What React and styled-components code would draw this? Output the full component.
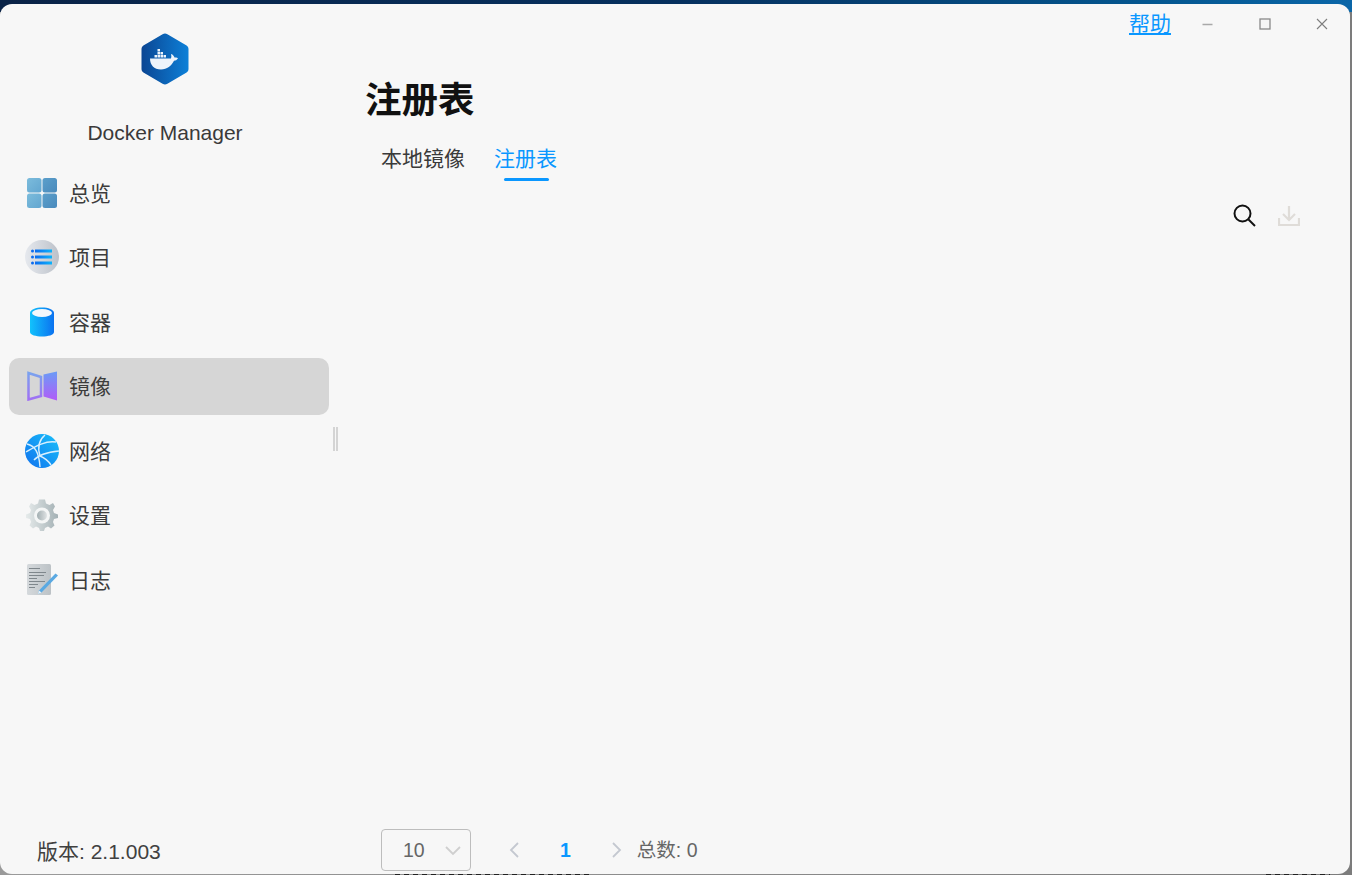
import React from "react";
import styled, { createGlobalStyle } from "styled-components";

const FONT = `"Liberation Sans", "Noto Sans CJK SC", sans-serif`;
const BLUE = "#0a97ff";

const GlobalStyle = createGlobalStyle`
  html, body { margin: 0; padding: 0; height: 100%; overflow: hidden; }
  #root { height: 100%; }
  * { box-sizing: border-box; }
`;

const Desktop = styled.div`
  height: 875px;
  padding: 4px 2px 1px 0;
  display: flex;
  font-family: ${FONT};
  background:
    linear-gradient(90deg, #0a2347 0%, #06305e 50%, #04568f 85%, #0a66a8 100%) top / 100% 12px no-repeat,
    repeating-linear-gradient(90deg, #222 0 5px, transparent 5px 9px) 395px bottom / 195px 1px no-repeat,
    repeating-linear-gradient(90deg, #222 0 5px, transparent 5px 9px) 1266px bottom / 64px 1px no-repeat,
    linear-gradient(90deg, #9a9a9a, #7c7c7c);
`;

const Window = styled.div`
  flex: 1;
  display: flex;
  background: #f7f7f7;
  border-radius: 12px;
  overflow: hidden;
`;

const Sidebar = styled.aside`
  position: relative;
  width: 330px;
  flex: none;
  display: flex;
  flex-direction: column;
`;

const Brand = styled.div`
  display: flex;
  flex-direction: column;
  align-items: center;
  padding-top: 29px;
  height: 160px;
`;

const BrandName = styled.div`
  margin-top: 35px;
  font-size: 21px;
  line-height: 26px;
  color: #3a3a3a;
`;

const Nav = styled.nav`
  display: flex;
  flex-direction: column;
  gap: 7.5px;
  padding-left: 9px;
`;

const NavItem = styled.div`
  width: 320px;
  height: 57px;
  display: flex;
  align-items: center;
  gap: 10px;
  padding-left: 16px;
  border-radius: 10px;
  font-size: 21px;
  color: #3c3c3c;
  background: ${(p) => (p.$active ? "#d6d6d6" : "transparent")};
`;

const NavLabel = styled.span`
  padding-bottom: 2px;
`;

const NavIcon = styled.span`
  width: 34px;
  height: 36px;
  flex: none;
  display: flex;
  align-items: center;
  justify-content: center;
`;

const Version = styled.div`
  margin-top: auto;
  padding: 0 0 9px 37px;
  font-size: 21px;
  line-height: 26px;
  color: #404040;
`;

const Splitter = styled.div`
  position: absolute;
  left: 333px;
  top: 423px;
  width: 5px;
  height: 24px;
  border-left: 2px solid #d4d4d4;
  border-right: 2px solid #d4d4d4;
`;

const Main = styled.main`
  flex: 1;
  min-width: 0;
  display: flex;
  flex-direction: column;
`;

const TitleBar = styled.div`
  height: 40px;
  display: flex;
  justify-content: flex-end;
  align-items: center;
`;

const HelpLink = styled.a`
  font-size: 21px;
  line-height: 40px;
  color: ${BLUE};
  text-decoration: underline;
  margin-right: 8px;
`;

const WinButton = styled.button`
  width: 57px;
  height: 40px;
  padding: 0;
  border: 0;
  background: none;
  display: flex;
  align-items: center;
  justify-content: center;
`;

const PageTitle = styled.h1`
  margin: 32px 0 0 35px;
  font-size: 36.5px;
  line-height: 50px;
  font-weight: 700;
  color: #111;
`;

const Tabs = styled.div`
  display: flex;
  margin: 6px 0 0 51px;
  gap: 29px;
`;

const Tab = styled.div`
  position: relative;
  height: 49px;
  padding-top: 6px;
  font-size: 21px;
  line-height: 42px;
  color: ${(p) => (p.$active ? BLUE : "#3a3a3a")};
  &::after {
    content: "";
    display: ${(p) => (p.$active ? "block" : "none")};
    position: absolute;
    left: 10px;
    right: 8px;
    bottom: 0;
    height: 3px;
    border-radius: 2px;
    background: ${BLUE};
  }
`;

const Toolbar = styled.div`
  display: flex;
  justify-content: flex-end;
  align-items: center;
  gap: 22px;
  margin-top: 19px;
  padding-right: 50px;
  height: 30px;
`;

const Pager = styled.div`
  margin-top: auto;
  display: flex;
  align-items: center;
  height: 42px;
  margin-bottom: 3px;
  padding-left: 51px;
  font-size: 19.5px;
  color: #666;
`;

const PageSize = styled.div`
  width: 90px;
  height: 42px;
  display: flex;
  align-items: center;
  justify-content: space-between;
  padding: 0 9px 0 21px;
  border: 1px solid #bdbdbd;
  border-radius: 4px;
`;

const PagerArrow = styled.span`
  display: flex;
  align-items: center;
  margin-left: ${(p) => p.$left}px;
`;

const PageNumber = styled.span`
  margin-left: 37px;
  font-weight: 700;
  color: ${BLUE};
`;

const Total = styled.span`
  margin-left: 13px;
  padding-bottom: 3px;
`;

const DockerLogo = () => (
  <svg width="48" height="52" viewBox="0 0 48 52">
    <defs>
      <linearGradient id="hex" x1="0" x2="1" y1="0" y2="0">
        <stop offset="0" stopColor="#0b4693" />
        <stop offset="1" stopColor="#0d80d8" />
      </linearGradient>
    </defs>
    <path
      d="M21.6 1.2 Q24 0 26.4 1.2 L45.6 12.4 Q47.5 13.5 47.5 15.8 V36.2 Q47.5 38.5 45.6 39.6 L26.4 50.8 Q24 52 21.6 50.8 L2.4 39.6 Q.5 38.5 .5 36.2 V15.8 Q.5 13.5 2.4 12.4 Z"
      fill="url(#hex)"
    />
    <g fill="#eef4fb">
      <rect x="16.500" y="16" width="2.500" height="2.500" />
      <rect x="16.500" y="19" width="2.500" height="2.500" />
      <rect x="19.500" y="19" width="2.500" height="2.500" />
      <rect x="13.500" y="22" width="2.500" height="2.500" />
      <rect x="16.500" y="22" width="2.500" height="2.500" />
      <rect x="19.500" y="22" width="2.500" height="2.500" />
      <rect x="22.500" y="22" width="2.500" height="2.500" />
      <path d="M9 25.500 H30 C30.500 24 30.500 22.500 30 21 C32 21.500 33 23 33.500 24.500 C34.800 24.300 36.500 24.500 37 25.300 C36 27 34.500 27.800 33 27.800 C30.500 33 26 36.500 20 36.500 C13 36.500 9 32 9 25.500 Z" />
    </g>
  </svg>
);

const OverviewIcon = () => (
  <svg width="32" height="32" viewBox="0 0 32 32">
    <defs>
      <linearGradient id="ovA" x1="0" x2="1" y1="0" y2="1">
        <stop offset="0" stopColor="#7cbcdc" />
        <stop offset="1" stopColor="#62a6d0" />
      </linearGradient>
      <linearGradient id="ovB" x1="0" x2="1" y1="0" y2="1">
        <stop offset="0" stopColor="#5b9fcb" />
        <stop offset="1" stopColor="#4a8abc" />
      </linearGradient>
    </defs>
    <rect x="1" y="1" width="14.500" height="14.500" rx="2.500" fill="url(#ovA)" />
    <rect x="16.500" y="1" width="14.500" height="14.500" rx="2.500" fill="url(#ovB)" />
    <rect x="1" y="16.500" width="14.500" height="14.500" rx="2.500" fill="url(#ovA)" />
    <rect x="16.500" y="16.500" width="14.500" height="14.500" rx="2.500" fill="url(#ovB)" />
  </svg>
);

const ProjectIcon = () => (
  <svg width="34" height="34" viewBox="0 0 34 34">
    <defs>
      <linearGradient id="prjBg" x1="0" x2="1" y1="0" y2="0">
        <stop offset="0" stopColor="#e6e9ee" />
        <stop offset="1" stopColor="#bcc1c9" />
      </linearGradient>
      <linearGradient id="prjBar" x1="0" x2="1" y1="0" y2="0">
        <stop offset="0" stopColor="#0b6cf0" />
        <stop offset="1" stopColor="#0bb4fb" />
      </linearGradient>
    </defs>
    <circle cx="17" cy="17" r="17" fill="url(#prjBg)" />
    <g fill="#0b6cf0">
      <circle cx="7.500" cy="11" r="1.500" />
      <circle cx="7.500" cy="17" r="1.500" />
      <circle cx="7.500" cy="23" r="1.500" />
    </g>
    <g fill="url(#prjBar)">
      <rect x="10" y="9.500" width="17" height="3" />
      <rect x="10" y="15.500" width="17" height="3" />
      <rect x="10" y="21.500" width="17" height="3" />
    </g>
  </svg>
);

const ContainerIcon = () => (
  <svg width="24" height="30" viewBox="0 0 24 30">
    <defs>
      <linearGradient id="cyl" x1="0" x2="1" y1="0" y2="0">
        <stop offset="0" stopColor="#12c2fc" />
        <stop offset="1" stopColor="#0b72f0" />
      </linearGradient>
    </defs>
    <path d="M0 6 C0 -1.500 24 -1.500 24 6 V25 C24 31 0 31 0 25 Z" fill="url(#cyl)" />
    <ellipse cx="12" cy="6" rx="10" ry="4" fill="#f4f8fb" />
  </svg>
);

const ImageIcon = () => (
  <svg width="31" height="30" viewBox="0 0 31 30">
    <defs>
      <linearGradient id="book" x1="0" x2="0" y1="0" y2="1">
        <stop offset="0" stopColor="#6a9cf6" />
        <stop offset="1" stopColor="#b25cf8" />
      </linearGradient>
      <linearGradient id="bookL" x1="0" x2="0" y1="0" y2="1">
        <stop offset="0" stopColor="#7aa2ee" />
        <stop offset="1" stopColor="#a070f4" />
      </linearGradient>
    </defs>
    <path d="M1.500 2 L14 6 V25 L1.500 28.500 Z" fill="none" stroke="url(#bookL)" strokeWidth="2.500" />
    <path d="M16.500 3.500 L30 0.500 V29.500 L16.500 25.500 Z" fill="url(#book)" />
  </svg>
);

const NetworkIcon = () => (
  <svg width="34" height="34" viewBox="0 0 34 34">
    <defs>
      <linearGradient id="globe" x1="1" x2="0" y1="0" y2="1">
        <stop offset="0" stopColor="#18c0fa" />
        <stop offset="1" stopColor="#1172ee" />
      </linearGradient>
    </defs>
    <circle cx="17" cy="17" r="17" fill="url(#globe)" />
    <g fill="none" stroke="#d8effe" strokeWidth="1.400">
      <path d="M2 10 C10 12 14 18 15 33" />
      <path d="M1 18 C8 14 20 6 31 8" />
      <path d="M9 26 C14 20 24 18 34 17" />
      <path d="M15 22 C20 24 24 28 26 31" />
      <path d="M20 1 C14 6 12 12 15 22" />
    </g>
  </svg>
);

const SettingsIcon = () => (
  <svg width="32" height="32" viewBox="0 0 32 32">
    <defs>
      <linearGradient id="gear" x1="0" x2="1" y1="0" y2="0">
        <stop offset="0" stopColor="#e6ebeb" />
        <stop offset="1" stopColor="#a4b1b5" />
      </linearGradient>
      <linearGradient id="hub" x1="0" x2="1" y1="0" y2="0">
        <stop offset="0" stopColor="#a2aeb1" />
        <stop offset="1" stopColor="#dfe3e4" />
      </linearGradient>
    </defs>
    <path
      d="M13 0.500 H19 L20 4.500 L23.500 6 L27 4 L29 7.500 L27 11 L28 14 L32 15.500 V19 L28 20 L27 23 L28.500 26.500 L25 29.500 L22 27.500 L19 29 L18 32 H14 L13 29 L10 27.500 L7 29.500 L3.500 26.500 L5 23 L4 20 L0 19 V15.500 L4 14 L5 11 L3 7.500 L5 4 L8.500 6 L12 4.500 Z"
      fill="url(#gear)"
    />
    <circle cx="16" cy="16.500" r="8" fill="#f4f6f6" />
    <circle cx="16" cy="16.500" r="5" fill="url(#hub)" />
  </svg>
);

const LogIcon = () => (
  <svg width="33" height="33" viewBox="0 0 33 33">
    <defs>
      <linearGradient id="paper" x1="0" x2="1" y1="0" y2="0">
        <stop offset="0" stopColor="#d5d9dc" />
        <stop offset="1" stopColor="#bcc2c6" />
      </linearGradient>
    </defs>
    <rect x="1" y="1" width="24" height="31" rx="1.500" fill="url(#paper)" />
    <g stroke="#7f878c" strokeWidth="1">
      <path d="M3 5.500 H14" />
      <path d="M3 9.500 H20" />
      <path d="M3 12.500 H18" />
      <path d="M3 15.500 H11" />
      <path d="M3 18.500 H19" />
      <path d="M3 21.500 H12" />
      <path d="M3 24.500 H9" />
    </g>
    <path d="M13 27.500 L29.500 10.500 L32 12.500 L15.500 29.500 L12 31 Z" fill="#5aa9e2" />
    <path d="M13 27.500 L15.500 29.500 L12 31 Z" fill="#eaf2f8" />
  </svg>
);

const NAV_ITEMS = [
  { label: "总览", Icon: OverviewIcon },
  { label: "项目", Icon: ProjectIcon },
  { label: "容器", Icon: ContainerIcon },
  { label: "镜像", Icon: ImageIcon, active: true },
  { label: "网络", Icon: NetworkIcon },
  { label: "设置", Icon: SettingsIcon },
  { label: "日志", Icon: LogIcon },
];

const Chevron = ({ dir, color, size = 16 }) => {
  const d = {
    down: "M1 5 L8 12 L15 5",
    left: "M11 1 L4 8 L11 15",
    right: "M5 1 L12 8 L5 15",
  }[dir];
  return (
    <svg width={size} height={size} viewBox="0 0 16 16">
      <path d={d} fill="none" stroke={color} strokeWidth="1.800" />
    </svg>
  );
};

export default function App() {
  return (
    <>
      <GlobalStyle />
      <Desktop>
        <Window>
          <Sidebar>
            <Brand>
              <DockerLogo />
              <BrandName>Docker Manager</BrandName>
            </Brand>
            <Nav>
              {NAV_ITEMS.map(({ label, Icon, active }) => (
                <NavItem key={label} $active={active}>
                  <NavIcon>
                    <Icon />
                  </NavIcon>
                  <NavLabel>{label}</NavLabel>
                </NavItem>
              ))}
            </Nav>
            <Version>版本: 2.1.003</Version>
            <Splitter />
          </Sidebar>
          <Main>
            <TitleBar>
              <HelpLink>帮助</HelpLink>
              <WinButton aria-label="minimize">
                <svg width="11" height="11" viewBox="0 0 11 11">
                  <path d="M0.500 5.500 H10.500" stroke="#a9a9a9" strokeWidth="1.500" />
                </svg>
              </WinButton>
              <WinButton aria-label="maximize">
                <svg width="12" height="12" viewBox="0 0 12 12">
                  <rect x="1" y="1" width="10" height="10" fill="none" stroke="#8a8a8a" strokeWidth="1.300" />
                </svg>
              </WinButton>
              <WinButton aria-label="close">
                <svg width="12" height="12" viewBox="0 0 12 12">
                  <path d="M1 1 L11 11 M11 1 L1 11" stroke="#7e7e7e" strokeWidth="1.100" />
                </svg>
              </WinButton>
            </TitleBar>
            <PageTitle>注册表</PageTitle>
            <Tabs>
              <Tab>本地镜像</Tab>
              <Tab $active>注册表</Tab>
            </Tabs>
            <Toolbar>
              <svg width="23" height="23" viewBox="0 0 23 23">
                <circle cx="9.500" cy="9.500" r="8" fill="none" stroke="#111" strokeWidth="2" />
                <path d="M15.500 15.500 L22 22" stroke="#111" strokeWidth="2" />
              </svg>
              <svg width="22" height="21" viewBox="0 0 22 21">
                <path d="M1 13 V20 H21 V13 M11 1 V15 M5 9 L11 15 L17 9" fill="none" stroke="#dfdcd8" strokeWidth="2.200" />
              </svg>
            </Toolbar>
            <Pager>
              <PageSize>
                10
                <Chevron dir="down" color="#cfcfcf" />
              </PageSize>
              <PagerArrow $left={36}>
                <Chevron dir="left" color="#c4c8d0" />
              </PagerArrow>
              <PageNumber>1</PageNumber>
              <PagerArrow $left={37}>
                <Chevron dir="right" color="#c4c8d0" />
              </PagerArrow>
              <Total>总数: 0</Total>
            </Pager>
          </Main>
        </Window>
      </Desktop>
    </>
  );
}
